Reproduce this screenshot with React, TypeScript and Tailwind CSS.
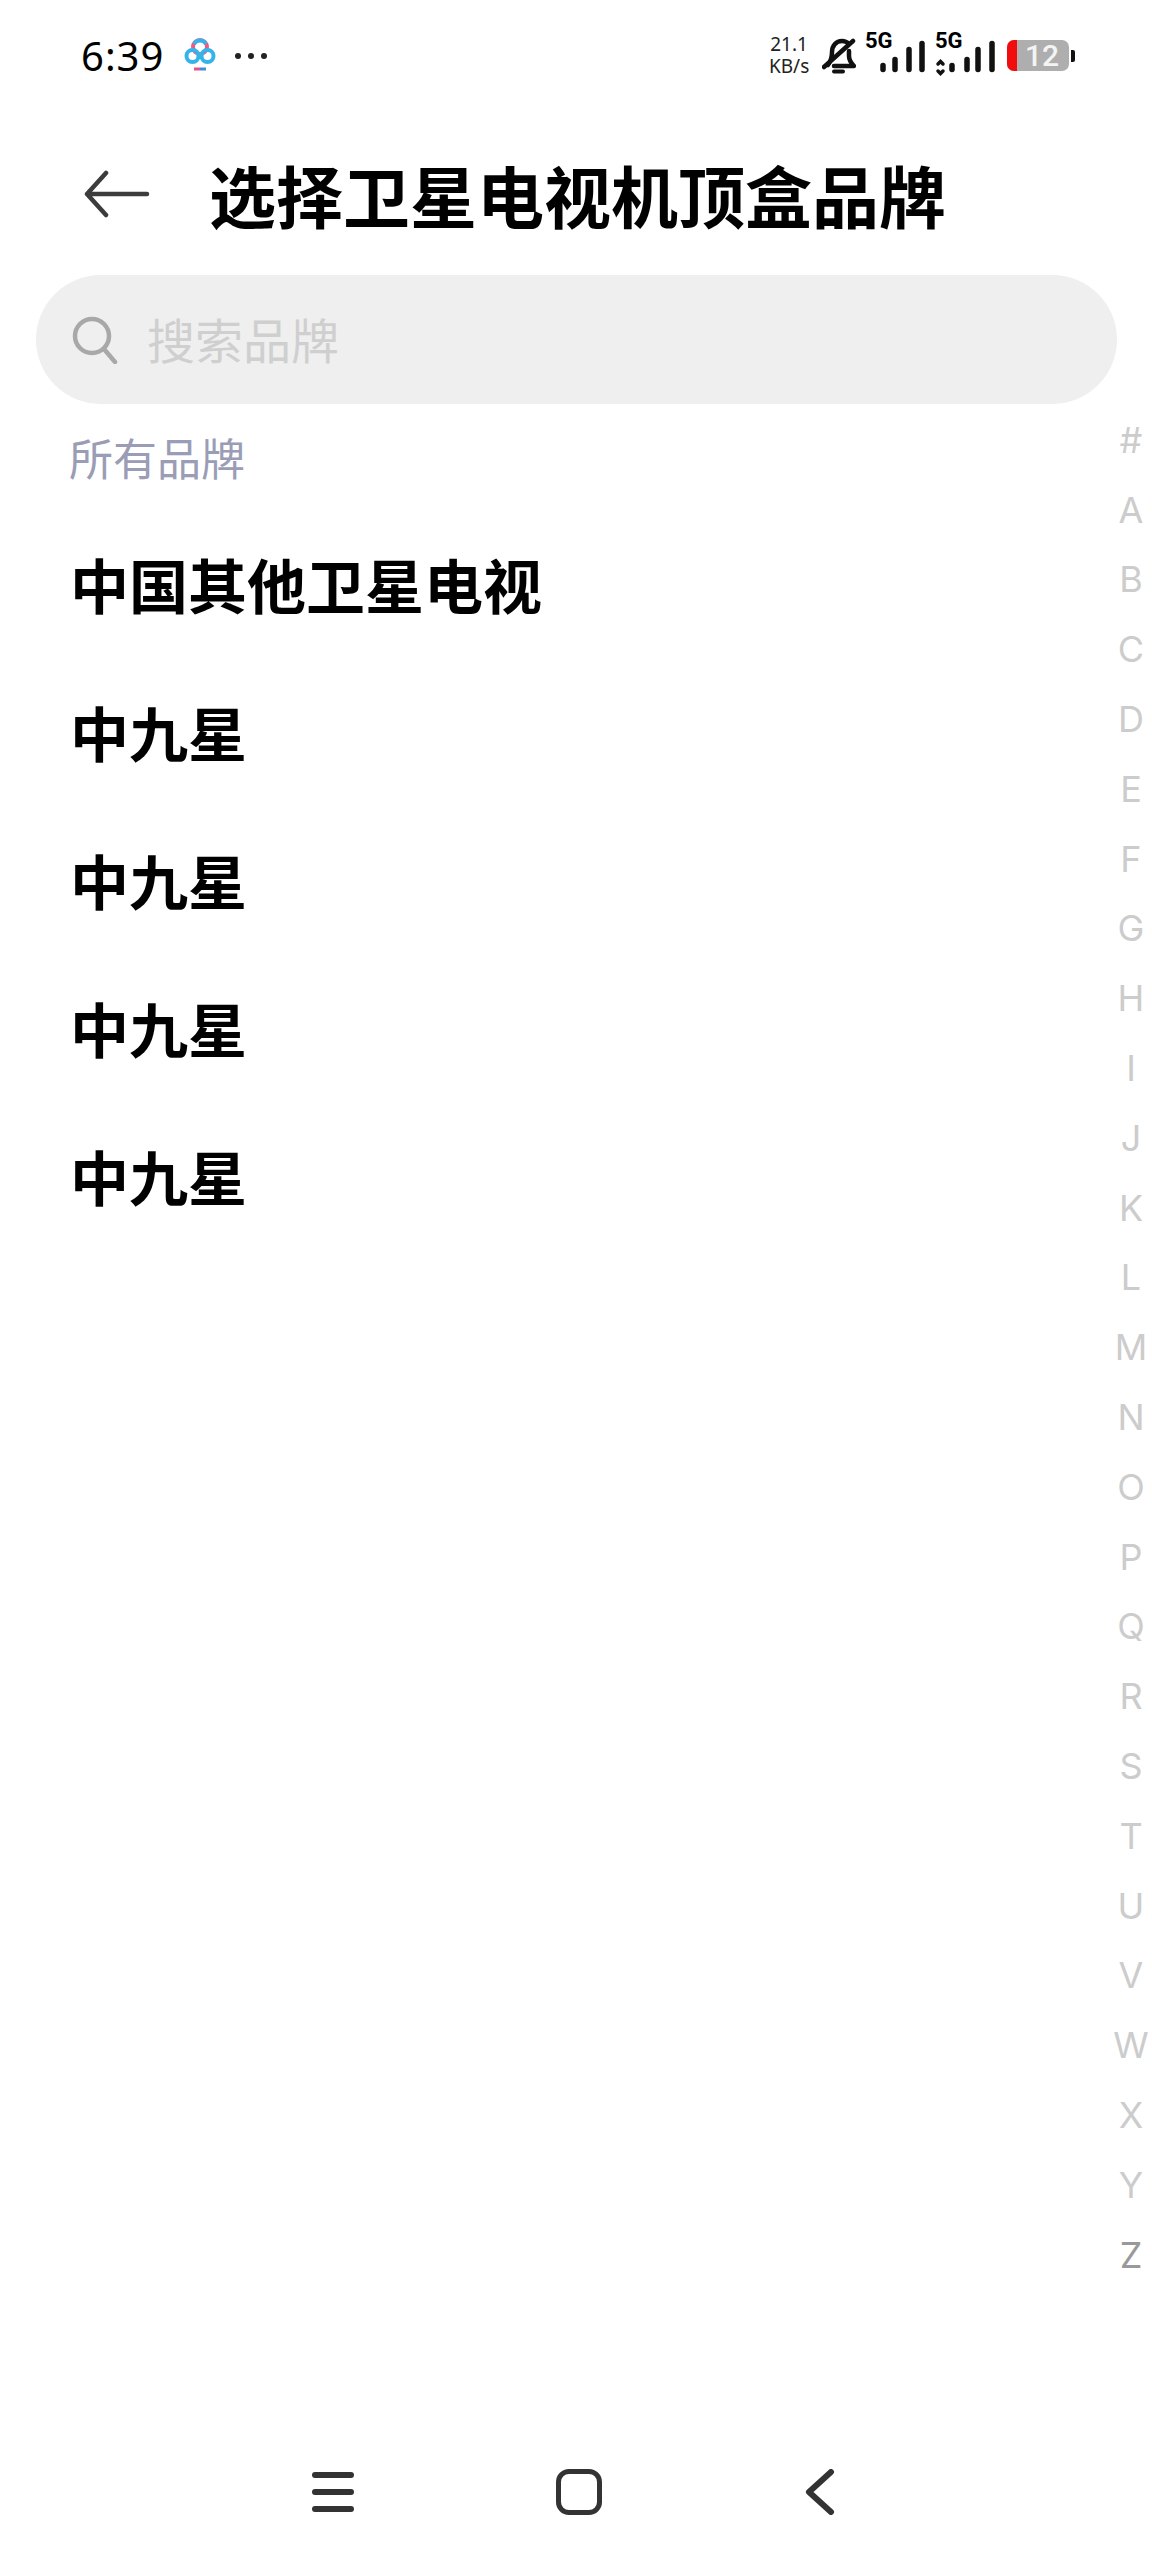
import React from 'react';

const font = { fontFamily: '"Noto Sans CJK SC", "Noto Sans", sans-serif' };
const letters = ['#', ...'ABCDEFGHIJKLMNOPQRSTUVWXYZ'.split('')];
const brands = ['中国其他卫星电视', '中九星', '中九星', '中九星', '中九星'];

const Signal: React.FC<{ dots?: boolean }> = ({ dots }) => (
  <div className="w-[60px] mt-[1px]">
    <div className="h-[16px] text-[22px] leading-[16px] font-bold text-black font-['Roboto',sans-serif]">5G</div>
    <svg width="60" height="36" viewBox="0 0 60 36" className="-mt-[9px]" fill="none" stroke="#111" strokeWidth="5.5" strokeLinecap="round">
      {dots ? (
        <>
          <path d="M3 24l2.5-2.5L8 24M3 31l2.5 2.5L8 31" strokeWidth="3.5" />
          <path d="M17 25.5v4M32 19.5v10M43 9.5v20M57 3.5v26" />
        </>
      ) : (
        <path d="M18 25.5v4M30 19.5v10M44 9.5v20M57 3.5v26" />
      )}
    </svg>
  </div>
);

const StatusBar: React.FC = () => (
  <div className="h-[80px] pl-[81px] pr-[77px] pt-[32px] flex items-start justify-between">
    <div className="flex items-center h-[48px]">
      <span className="text-[40px] leading-[48px] text-black tracking-[1px] font-['Noto_Sans',sans-serif]">6:39</span>
      <svg width="32" height="40" viewBox="0 0 32 40" className="ml-[20px]" fill="none">
        <circle cx="16" cy="11" r="7" stroke="#ee5a80" strokeWidth="4" />
        <circle cx="8.5" cy="20" r="6" stroke="#35b4ea" strokeWidth="4" />
        <circle cx="23.5" cy="20" r="6" stroke="#35b4ea" strokeWidth="4" />
        <path d="M10 8a7 7 0 0 1 12 0" stroke="#35b4ea" strokeWidth="4" />
        <path d="M10 33h6" stroke="#e8508a" strokeWidth="3" />
        <path d="M16 33h6" stroke="#3f8fd8" strokeWidth="3" />
      </svg>
      <div className="flex gap-[7px] ml-[19px]">
        <span className="w-[6px] h-[6px] rounded-full bg-[#222]" />
        <span className="w-[6px] h-[6px] rounded-full bg-[#222]" />
        <span className="w-[6px] h-[6px] rounded-full bg-[#222]" />
      </div>
    </div>
    <div className="flex items-start">
      <div className="w-[40px] mt-[1px] text-center text-[19px] leading-[22px] text-[#222] font-['Noto_Sans',sans-serif]">
        <div>21.1</div>
        <div>KB/s</div>
      </div>
      <svg width="34" height="37" viewBox="0 0 34 37" className="ml-[13px] mt-[6px]" fill="none" stroke="#111" strokeWidth="4.5" strokeLinecap="round" strokeLinejoin="round">
        <path d="M6 27c3-4 4-7 4-13 0-6 4-11 10-11 3 0 5 1 7 3M27 13v5c0 4 2 7 5 10H12" />
        <path d="M2 29L31 3" />
        <path d="M12 33.5h9" strokeWidth="4" />
      </svg>
      <div className="ml-[9px]"><Signal /></div>
      <div className="ml-[10px]"><Signal dots /></div>
      <div className="flex items-center ml-[12px] mt-[8px]">
        <div className="w-[62px] h-[31px] rounded-[7px] bg-[#aeaeae] flex items-center">
          <div className="w-[10px] h-full rounded-l-[7px] bg-[#f10d0d]" />
          <span className="ml-[8px] text-[30px] leading-[31px] font-medium text-[#f4f4f4] font-['Roboto',sans-serif]">12</span>
        </div>
        <div className="ml-[2px] w-[4px] h-[12px] rounded-r-[2px] bg-[#111]" />
      </div>
    </div>
  </div>
);

const App: React.FC = () => (
  <div className="relative w-[1152px] h-[2560px] bg-white overflow-hidden flex flex-col" style={font}>
    <StatusBar />
    <header className="h-[116px] mt-[56px] pl-[84px] flex items-center">
      <svg width="66" height="48" viewBox="0 0 66 48" fill="none" stroke="#3c3c3c" strokeWidth="4.5" strokeLinecap="round" strokeLinejoin="round">
        <path d="M22 3L3 24l19 21M3 24h60" />
      </svg>
      <h1 className="ml-[59px] text-[67px] leading-[80px] font-bold text-black whitespace-nowrap">选择卫星电视机顶盒品牌</h1>
    </header>
    <div className="mt-[23px] mx-[36px] w-[1081px] h-[129px] rounded-full bg-[#efefef] flex items-center pl-[36px]">
      <svg width="46" height="48" viewBox="0 0 46 48" fill="none" stroke="#a8a8a8" strokeWidth="4.5" strokeLinecap="round">
        <circle cx="20" cy="20" r="17" />
        <path d="M32 33l11 13" />
      </svg>
      <span className="ml-[29px] -mt-[3px] text-[48px] leading-[60px] text-[#cfcfcf]">搜索品牌</span>
    </div>
    <div className="mt-[23px] ml-[69px] text-[44px] leading-[60px] text-[#9a9db5]">所有品牌</div>
    <ul className="mt-[23px] ml-[70px]">
      {brands.map((name, i) => (
        <li key={i} className="h-[148px] flex items-center text-[59px] font-bold text-black">{name}</li>
      ))}
    </ul>
    {/* alphabet index floats over the list */}
    <div className="absolute right-0 top-[405px] w-[42px] flex flex-col items-center">
      {letters.map((l) => (
        <div key={l} className={l === 'Z' ? "h-[69.8px] w-full flex items-center justify-center text-[36px] font-normal text-[#999999] font-['Inter',sans-serif]" : "h-[69.8px] w-full flex items-center justify-center text-[36px] font-normal text-[#cccccc] font-['Inter',sans-serif]"}>{l}</div>
      ))}
    </div>
    <nav className="mt-auto mb-[45px] pl-[312px] flex items-center">
      <div className="w-[42px] flex flex-col gap-[11px]">
        <div className="h-[6px] rounded-full bg-[#333]" />
        <div className="h-[6px] rounded-full bg-[#333]" />
        <div className="h-[6px] rounded-full bg-[#333]" />
      </div>
      <div className="ml-[202px] w-[46px] h-[46px] rounded-[13px] border-[5px] border-[#333]" />
      <svg width="30" height="46" viewBox="0 0 30 46" className="ml-[203px]" fill="none" stroke="#333" strokeWidth="6" strokeLinecap="round" strokeLinejoin="round">
        <path d="M26 3L4 23l22 20" />
      </svg>
    </nav>
  </div>
);

export default App;
